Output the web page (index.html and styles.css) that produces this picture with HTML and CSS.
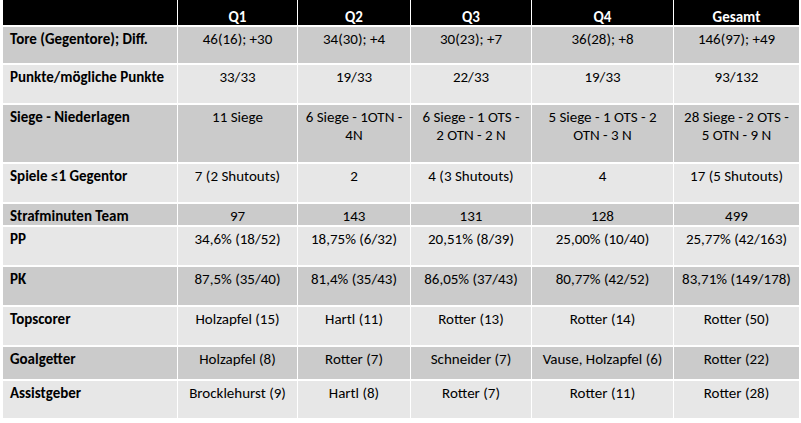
FILE: index.html
```html
<!DOCTYPE html>
<html lang="de">
<head>
<meta charset="utf-8">
<title>Saisonstatistik</title>
<link rel="stylesheet" href="styles.css">
</head>
<body>
<div class="stats">
  <div class="row head"><div></div><div>Q1</div><div>Q2</div><div>Q3</div><div>Q4</div><div>Gesamt</div></div>
  <div class="row dark"><div>Tore (Gegentore); Diff.</div><div>46(16); +30</div><div>34(30); +4</div><div>30(23); +7</div><div>36(28); +8</div><div>146(97); +49</div></div>
  <div class="row light"><div>Punkte/mögliche Punkte</div><div>33/33</div><div>19/33</div><div>22/33</div><div>19/33</div><div>93/132</div></div>
  <div class="row dark"><div>Siege - Niederlagen</div><div>11 Siege</div><div>6 Siege - 1OTN -<br>4N</div><div>6 Siege - 1 OTS -<br>2 OTN - 2 N</div><div>5 Siege - 1 OTS - 2<br>OTN - 3 N</div><div>28 Siege - 2 OTS -<br>5 OTN - 9 N</div></div>
  <div class="row light"><div>Spiele ≤1 Gegentor</div><div>7 (2 Shutouts)</div><div>2</div><div>4 (3 Shutouts)</div><div>4</div><div>17 (5 Shutouts)</div></div>
  <div class="row dark"><div>Strafminuten Team</div><div>97</div><div>143</div><div>131</div><div>128</div><div>499</div></div>
  <div class="row light"><div>PP</div><div>34,6% (18/52)</div><div>18,75% (6/32)</div><div>20,51% (8/39)</div><div>25,00% (10/40)</div><div>25,77% (42/163)</div></div>
  <div class="row dark"><div>PK</div><div>87,5% (35/40)</div><div>81,4% (35/43)</div><div>86,05% (37/43)</div><div>80,77% (42/52)</div><div>83,71% (149/178)</div></div>
  <div class="row light"><div>Topscorer</div><div>Holzapfel (15)</div><div>Hartl (11)</div><div>Rotter (13)</div><div>Rotter (14)</div><div>Rotter (50)</div></div>
  <div class="row dark"><div>Goalgetter</div><div>Holzapfel (8)</div><div>Rotter (7)</div><div>Schneider (7)</div><div>Vause, Holzapfel (6)</div><div>Rotter (22)</div></div>
  <div class="row light"><div>Assistgeber</div><div>Brocklehurst (9)</div><div>Hartl (8)</div><div>Rotter (7)</div><div>Rotter (11)</div><div>Rotter (28)</div></div>
</div>
</body>
</html>
```
FILE: styles.css
```css
html, body {
  margin: 0;
  padding: 0;
  background: #ffffff;
}
body {
  padding-left: 3px;
  font-family: "Carlito", "Lato", "Liberation Sans", sans-serif;
  font-size: 15px;
  line-height: 18px;
  color: #000000;
}
.stats {
  display: grid;
  grid-template-columns: 174px 119px 112px 120px 141px 125px;
  grid-template-rows: 25px 36px 38px 57px 38px 21px 38px 38px 38px 32px 37px;
  gap: 2px 1px;
  width: 796px;
}
.row {
  display: contents;
}
.row > div {
  padding-top: 3px;
  text-align: center;
  white-space: nowrap;
  overflow: hidden;
}
.row > div:first-child {
  text-align: left;
  padding-left: 7px;
  font-weight: bold;
}
.head > div {
  background: #000000;
  color: #ffffff;
  font-weight: bold;
  padding-top: 8px;
}
.dark > div {
  background: #cbcbcb;
}
.light > div {
  background: #e7e7e7;
}
```
